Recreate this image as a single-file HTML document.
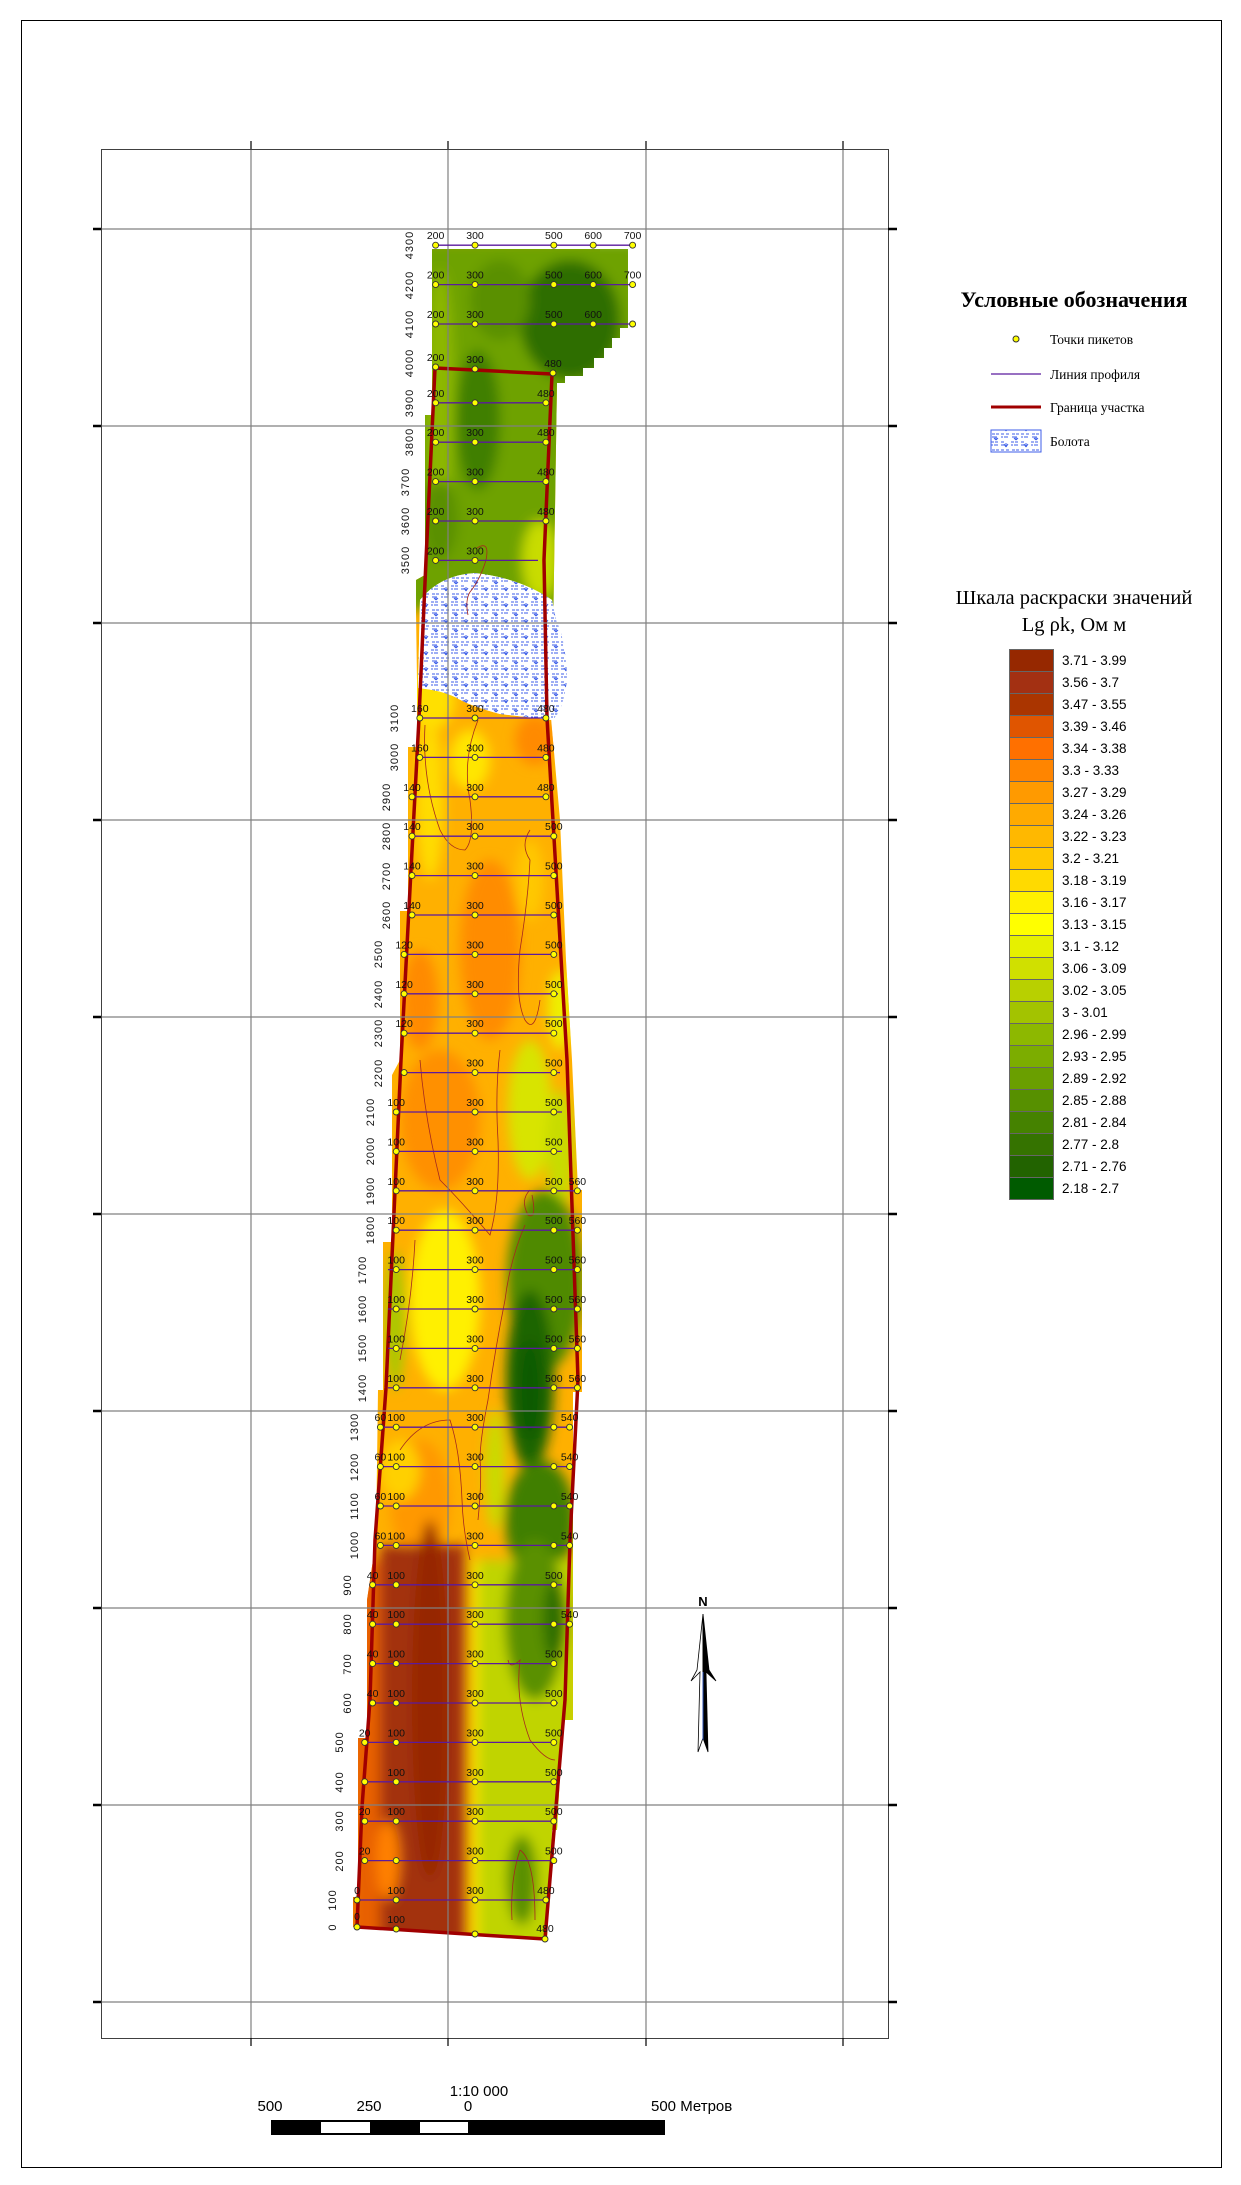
<!DOCTYPE html>
<html><head><meta charset="utf-8"><style>
html,body{margin:0;padding:0;background:#fff}
svg{display:block}
.pk text{font:10.5px "Liberation Sans",sans-serif;fill:#111;text-anchor:middle}
.rl{font:11px "Liberation Sans",sans-serif;fill:#111;text-anchor:middle;letter-spacing:1px}
</style></head><body>
<svg width="1241" height="2185" viewBox="0 0 1241 2185" xmlns="http://www.w3.org/2000/svg">
<defs>
<filter id="bl" x="-20%" y="-20%" width="140%" height="140%"><feGaussianBlur stdDeviation="6"/></filter>
<clipPath id="rc"><polygon points="432,249 628,249 628,328 620,328 620,338 612,338 612,348 604,348 604,358 594,358 594,368 583,368 583,376 565,376 565,383 557,383 552,700 551,718 560,820 566,960 572,1060 578,1190 582,1190 582,1392 573,1392 573,1720 563,1720 557,1830 552,1830 547,1940 356,1928 353,1927 353,1897 358,1897 358,1738 367,1738 367,1600 376,1540 378,1390 383,1390 383,1242 392,1242 392,1075 400,1060 400,911 408,911 408,747 417,747 417,680 416,612 416,580 425,575 425,415 432,415"/></clipPath>
<pattern id="sw" width="20" height="16" patternUnits="userSpaceOnUse">
<rect width="20" height="16" fill="#fff"/>
<g stroke="#3d5ee8" stroke-width="1" fill="none">
<path d="M1 2h3M6 2h3M1 5h2M4 5h4M11 10h3M15 10h3M11 13h2M14 13h4M1 10h3M1 13h4M12 2h3M16 2h3M12 5h5"/>
<path d="M6 15v-4M6 15l-2-3M6 15l2-3M16 8v-3M16 8l-2-2M16 8l2-2"/>
</g></pattern>
</defs>

<rect x="21.5" y="20.5" width="1200" height="2147" fill="none" stroke="#000" stroke-width="1"/>

<g clip-path="url(#rc)">
<rect x="340" y="240" width="260" height="1710" fill="#ffb000"/>
<g filter="url(#bl)">
<rect x="400" y="240" width="240" height="370" fill="#6ea200"/>
<ellipse cx="440" cy="400" rx="14" ry="130" fill="#8db800"/>
<ellipse cx="478" cy="420" rx="22" ry="70" fill="#3f7f00"/>
<ellipse cx="570" cy="320" rx="50" ry="60" fill="#2e6e00"/>
<ellipse cx="500" cy="300" rx="30" ry="40" fill="#5a9000"/>
<ellipse cx="540" cy="560" rx="18" ry="40" fill="#c8dc00"/>
<ellipse cx="440" cy="520" rx="18" ry="40" fill="#5a9000"/>
<ellipse cx="430" cy="700" rx="25" ry="30" fill="#ffe000"/>
<ellipse cx="430" cy="800" rx="14" ry="80" fill="#ffdc00"/>
<ellipse cx="470" cy="760" rx="20" ry="30" fill="#ffe600"/>
<ellipse cx="535" cy="740" rx="20" ry="25" fill="#ff8a00"/>
<ellipse cx="490" cy="950" rx="30" ry="90" fill="#ff8c00"/>
<ellipse cx="420" cy="1000" rx="18" ry="50" fill="#ff8a00"/>
<ellipse cx="560" cy="1010" rx="12" ry="40" fill="#eef000"/>
<ellipse cx="530" cy="880" rx="14" ry="40" fill="#ffc800"/>
<ellipse cx="440" cy="1120" rx="40" ry="70" fill="#ff9000"/>
<ellipse cx="530" cy="1110" rx="22" ry="70" fill="#d8e400"/>
<ellipse cx="560" cy="1150" rx="14" ry="60" fill="#c8dc00"/>
<ellipse cx="445" cy="1300" rx="35" ry="90" fill="#fff000"/>
<ellipse cx="395" cy="1320" rx="10" ry="70" fill="#a8c800"/>
<ellipse cx="545" cy="1280" rx="38" ry="90" fill="#4f8a00"/>
<ellipse cx="530" cy="1380" rx="24" ry="90" fill="#1f6500"/>
<ellipse cx="530" cy="1390" rx="12" ry="50" fill="#0a5a00"/>
<ellipse cx="420" cy="1500" rx="30" ry="60" fill="#ff9800"/>
<ellipse cx="400" cy="1470" rx="20" ry="30" fill="#ffd000"/>
<ellipse cx="540" cy="1520" rx="35" ry="60" fill="#3f7f00"/>
<ellipse cx="495" cy="1470" rx="10" ry="60" fill="#c8dc00"/>
<rect x="350" y="1560" width="125" height="400" fill="#e86000"/>
<rect x="380" y="1545" width="85" height="400" fill="#a33010"/>
<ellipse cx="430" cy="1700" rx="18" ry="180" fill="#962800"/>
<ellipse cx="388" cy="1860" rx="12" ry="40" fill="#ff8000"/>
<rect x="478" y="1560" width="100" height="400" fill="#c0d400"/>
<rect x="470" y="1560" width="8" height="400" fill="#ffe800"/>
<ellipse cx="535" cy="1620" rx="30" ry="80" fill="#5a9000"/>
<ellipse cx="555" cy="1620" rx="12" ry="40" fill="#2e6e00"/>
<ellipse cx="522" cy="1880" rx="15" ry="45" fill="#5a9000"/>
</g>
</g>

<path d="M420 600 Q440 575 475 573 Q520 578 552 600 L556 620 Q566 640 567 680 Q563 712 552 720 L500 714 Q470 706 455 697 Q440 690 418 688 Z" fill="#fff"/>
<path d="M420 600 Q440 575 475 573 Q520 578 552 600 L556 620 Q566 640 567 680 Q563 712 552 720 L500 714 Q470 706 455 697 Q440 690 418 688 Z" fill="url(#sw)"/>

<g fill="none" stroke="#a5281e" stroke-width="0.8">
<path d="M477 548 Q490 540 486 560 Q480 580 470 592 Q465 600 468 615"/>
<path d="M425 725 Q422 780 440 830 Q450 850 465 850 Q475 840 470 800 Q462 760 478 720"/>
<path d="M530 830 Q520 845 530 860 Q528 900 520 950 Q515 1000 525 1020 Q535 1035 540 1000"/>
<path d="M420 1060 Q425 1120 440 1180 Q460 1200 490 1235 Q500 1200 498 1140 Q495 1090 500 1050"/>
<path d="M530 1190 Q520 1200 528 1215 Q537 1220 532 1195"/>
<path d="M525 1225 Q510 1260 505 1300 Q495 1350 488 1400 Q480 1440 480 1460 Q482 1480 478 1520"/>
<path d="M415 1240 Q412 1300 400 1360"/>
<path d="M400 1450 Q420 1420 450 1420 Q460 1450 462 1500 Q463 1530 470 1560"/>
<path d="M508 1660 Q510 1670 520 1660 Q515 1700 530 1740 Q545 1760 555 1760"/>
<path d="M520 1850 Q510 1880 512 1920 M520 1850 Q535 1860 535 1920"/>
</g>

<polygon points="435,368 552,374 544,560 547,718 567,1060 578,1380 572,1500 570,1540 565,1700 556,1807 545,1939 357,1927 362,1807 370,1700 375,1540 386,1388 401,1060 419,718 426,560" fill="none" stroke="#a00000" stroke-width="3.5" stroke-linejoin="round"/>

<g stroke="#808080" stroke-width="1.2">
<path d="M251 149V2038M448 149V2038M646 149V2038M843 149V2038"/>
<path d="M101 229H888M101 426H888M101 623H888M101 820H888M101 1017H888M101 1214H888M101 1411H888M101 1608H888M101 1805H888M101 2002H888"/>
</g>
<rect x="101.5" y="149.5" width="787" height="1889" fill="none" stroke="#404040" stroke-width="1"/>
<g stroke="#000" stroke-width="1.2">
<path d="M251 141V149M448 141V149M646 141V149M843 141V149M251 2038V2046M448 2038V2046M646 2038V2046M843 2038V2046"/>
</g>
<g stroke="#000" stroke-width="2.5">
<path d="M93 229H101M93 426H101M93 623H101M93 820H101M93 1017H101M93 1214H101M93 1411H101M93 1608H101M93 1805H101M93 2002H101"/>
<path d="M888 229H897M888 426H897M888 623H897M888 820H897M888 1017H897M888 1214H897M888 1411H897M888 1608H897M888 1805H897M888 2002H897"/>
</g>

<g stroke="#5b1a9e" stroke-width="1.3">
<path d="M435.6 245.2H632.6M435.6 284.6H632.6M435.6 324H632.6M435.6 402.8H545.9M435.6 442.2H545.9M435.6 481.6H545.9M435.6 521H545.9M435.6 560.4H538"/>
<path d="M419.8 718H545.9M419.8 757.4H545.9M412 796.8H545.9M412 836.2H553.8M412 875.6H553.8M412 915H553.8M404.1 954.4H553.8M404.1 993.8H558M404.1 1033.2H553.8M404.1 1072.6H560M396.2 1112H562M396.2 1151.4H562M396.2 1190.8H577.4M396.2 1230.2H577.4M388 1269.6H577.4M388 1309H577.4M388 1348.4H577.4M388 1387.8H577.4"/>
<path d="M380.4 1427.2H569.6M380.4 1466.6H569.6M380.4 1506H569.6M380.4 1545.4H569.6M372.6 1584.8H562M372.6 1624.2H569.6M372.6 1663.6H553.8M372.6 1703H558M364.7 1742.4H553.8M364.7 1781.8H553.8M364.7 1821.2H553.8M364.7 1860.6H553.8M357 1900H545.9"/>
</g>

<g class="pk">
<g transform="translate(0,245.2)"><text x="435.6" y="-6">200</text><text x="475" y="-6">300</text><text x="553.8" y="-6">500</text><text x="593.2" y="-6">600</text><text x="632.6" y="-6">700</text></g>
<g transform="translate(0,284.6)"><text x="435.6" y="-6">200</text><text x="475" y="-6">300</text><text x="553.8" y="-6">500</text><text x="593.2" y="-6">600</text><text x="632.6" y="-6">700</text></g>
<g transform="translate(0,324)"><text x="435.6" y="-6">200</text><text x="475" y="-6">300</text><text x="553.8" y="-6">500</text><text x="593.2" y="-6">600</text></g>
<text x="435.6" y="361">200</text><text x="475" y="363">300</text><text x="553" y="367">480</text>
<g transform="translate(0,402.8)"><text x="435.6" y="-6">200</text><text x="545.9" y="-6">480</text></g>
<g transform="translate(0,442.2)"><text x="435.6" y="-6">200</text><text x="475" y="-6">300</text><text x="545.9" y="-6">480</text></g>
<g transform="translate(0,481.6)"><text x="435.6" y="-6">200</text><text x="475" y="-6">300</text><text x="545.9" y="-6">480</text></g>
<g transform="translate(0,521)"><text x="435.6" y="-6">200</text><text x="475" y="-6">300</text><text x="545.9" y="-6">480</text></g>
<g transform="translate(0,560.4)"><text x="435.6" y="-6">200</text><text x="475" y="-6">300</text></g>
<g transform="translate(0,718)"><text x="419.8" y="-6">160</text><text x="475" y="-6">300</text><text x="545.9" y="-6">480</text></g>
<g transform="translate(0,757.4)"><text x="419.8" y="-6">160</text><text x="475" y="-6">300</text><text x="545.9" y="-6">480</text></g>
<g transform="translate(0,796.8)"><text x="412" y="-6">140</text><text x="475" y="-6">300</text><text x="545.9" y="-6">480</text></g>
<g transform="translate(0,836.2)"><text x="412" y="-6">140</text><text x="475" y="-6">300</text><text x="553.8" y="-6">500</text></g>
<g transform="translate(0,875.6)"><text x="412" y="-6">140</text><text x="475" y="-6">300</text><text x="553.8" y="-6">500</text></g>
<g transform="translate(0,915)"><text x="412" y="-6">140</text><text x="475" y="-6">300</text><text x="553.8" y="-6">500</text></g>
<g transform="translate(0,954.4)"><text x="404.1" y="-6">120</text><text x="475" y="-6">300</text><text x="553.8" y="-6">500</text></g>
<g transform="translate(0,993.8)"><text x="404.1" y="-6">120</text><text x="475" y="-6">300</text><text x="553.8" y="-6">500</text></g>
<g transform="translate(0,1033.2)"><text x="404.1" y="-6">120</text><text x="475" y="-6">300</text><text x="553.8" y="-6">500</text></g>
<g transform="translate(0,1072.6)"><text x="475" y="-6">300</text><text x="553.8" y="-6">500</text></g>
<g transform="translate(0,1112)"><text x="396.2" y="-6">100</text><text x="475" y="-6">300</text><text x="553.8" y="-6">500</text></g>
<g transform="translate(0,1151.4)"><text x="396.2" y="-6">100</text><text x="475" y="-6">300</text><text x="553.8" y="-6">500</text></g>
<g transform="translate(0,1190.8)"><text x="396.2" y="-6">100</text><text x="475" y="-6">300</text><text x="553.8" y="-6">500</text><text x="577.4" y="-6">560</text></g>
<g transform="translate(0,1230.2)"><text x="396.2" y="-6">100</text><text x="475" y="-6">300</text><text x="553.8" y="-6">500</text><text x="577.4" y="-6">560</text></g>
<g transform="translate(0,1269.6)"><text x="396.2" y="-6">100</text><text x="475" y="-6">300</text><text x="553.8" y="-6">500</text><text x="577.4" y="-6">560</text></g>
<g transform="translate(0,1309)"><text x="396.2" y="-6">100</text><text x="475" y="-6">300</text><text x="553.8" y="-6">500</text><text x="577.4" y="-6">560</text></g>
<g transform="translate(0,1348.4)"><text x="396.2" y="-6">100</text><text x="475" y="-6">300</text><text x="553.8" y="-6">500</text><text x="577.4" y="-6">560</text></g>
<g transform="translate(0,1387.8)"><text x="396.2" y="-6">100</text><text x="475" y="-6">300</text><text x="553.8" y="-6">500</text><text x="577.4" y="-6">560</text></g>
<g transform="translate(0,1427.2)"><text x="380.4" y="-6">60</text><text x="396.2" y="-6">100</text><text x="475" y="-6">300</text><text x="569.6" y="-6">540</text></g>
<g transform="translate(0,1466.6)"><text x="380.4" y="-6">60</text><text x="396.2" y="-6">100</text><text x="475" y="-6">300</text><text x="569.6" y="-6">540</text></g>
<g transform="translate(0,1506)"><text x="380.4" y="-6">60</text><text x="396.2" y="-6">100</text><text x="475" y="-6">300</text><text x="569.6" y="-6">540</text></g>
<g transform="translate(0,1545.4)"><text x="380.4" y="-6">60</text><text x="396.2" y="-6">100</text><text x="475" y="-6">300</text><text x="569.6" y="-6">540</text></g>
<g transform="translate(0,1584.8)"><text x="372.6" y="-6">40</text><text x="396.2" y="-6">100</text><text x="475" y="-6">300</text><text x="553.8" y="-6">500</text></g>
<g transform="translate(0,1624.2)"><text x="372.6" y="-6">40</text><text x="396.2" y="-6">100</text><text x="475" y="-6">300</text><text x="569.6" y="-6">540</text></g>
<g transform="translate(0,1663.6)"><text x="372.6" y="-6">40</text><text x="396.2" y="-6">100</text><text x="475" y="-6">300</text><text x="553.8" y="-6">500</text></g>
<g transform="translate(0,1703)"><text x="372.6" y="-6">40</text><text x="396.2" y="-6">100</text><text x="475" y="-6">300</text><text x="553.8" y="-6">500</text></g>
<g transform="translate(0,1742.4)"><text x="364.7" y="-6">20</text><text x="396.2" y="-6">100</text><text x="475" y="-6">300</text><text x="553.8" y="-6">500</text></g>
<g transform="translate(0,1781.8)"><text x="396.2" y="-6">100</text><text x="475" y="-6">300</text><text x="553.8" y="-6">500</text></g>
<g transform="translate(0,1821.2)"><text x="364.7" y="-6">20</text><text x="396.2" y="-6">100</text><text x="475" y="-6">300</text><text x="553.8" y="-6">500</text></g>
<g transform="translate(0,1860.6)"><text x="364.7" y="-6">20</text><text x="475" y="-6">300</text><text x="553.8" y="-6">500</text></g>
<g transform="translate(0,1900)"><text x="357" y="-6">0</text><text x="396.2" y="-6">100</text><text x="475" y="-6">300</text><text x="545.9" y="-6">480</text></g>
<text x="357" y="1920">0</text><text x="396.2" y="1923">100</text><text x="545" y="1932">480</text>
</g>

<g fill="#ffff00" stroke="#333" stroke-width="0.9">
<g id="d1"><circle cx="435.6" cy="245.2" r="3"/><circle cx="475" cy="245.2" r="3"/><circle cx="553.8" cy="245.2" r="3"/><circle cx="593.2" cy="245.2" r="3"/><circle cx="632.6" cy="245.2" r="3"/></g>
<use href="#d1" transform="translate(0,39.4)"/><use href="#d1" transform="translate(0,78.8)"/>
<circle cx="435.6" cy="367" r="3"/><circle cx="475" cy="369" r="3"/><circle cx="553" cy="373" r="3"/>
<g id="d2"><circle cx="435.6" cy="402.8" r="3"/><circle cx="475" cy="402.8" r="3"/><circle cx="545.9" cy="402.8" r="3"/></g>
<use href="#d2" transform="translate(0,39.4)"/><use href="#d2" transform="translate(0,78.8)"/><use href="#d2" transform="translate(0,118.2)"/>
<circle cx="435.6" cy="560.4" r="3"/><circle cx="475" cy="560.4" r="3"/>
<circle cx="419.8" cy="718" r="3"/><circle cx="475" cy="718" r="3"/><circle cx="545.9" cy="718" r="3"/>
<circle cx="419.8" cy="757.4" r="3"/><circle cx="475" cy="757.4" r="3"/><circle cx="545.9" cy="757.4" r="3"/>
<circle cx="412" cy="796.8" r="3"/><circle cx="475" cy="796.8" r="3"/><circle cx="545.9" cy="796.8" r="3"/>
<g id="d3"><circle cx="412" cy="836.2" r="3"/><circle cx="475" cy="836.2" r="3"/><circle cx="553.8" cy="836.2" r="3"/></g>
<use href="#d3" transform="translate(0,39.4)"/><use href="#d3" transform="translate(0,78.8)"/>
<g id="d4"><circle cx="404.1" cy="954.4" r="3"/><circle cx="475" cy="954.4" r="3"/><circle cx="553.8" cy="954.4" r="3"/></g>
<use href="#d4" transform="translate(0,39.4)"/><use href="#d4" transform="translate(0,78.8)"/><use href="#d4" transform="translate(0,118.2)"/>
<circle cx="396.2" cy="1112" r="3"/><circle cx="475" cy="1112" r="3"/><circle cx="553.8" cy="1112" r="3"/>
<circle cx="396.2" cy="1151.4" r="3"/><circle cx="475" cy="1151.4" r="3"/><circle cx="553.8" cy="1151.4" r="3"/>
<g id="d5"><circle cx="396.2" cy="1190.8" r="3"/><circle cx="475" cy="1190.8" r="3"/><circle cx="553.8" cy="1190.8" r="3"/><circle cx="577.4" cy="1190.8" r="3"/></g>
<use href="#d5" transform="translate(0,39.4)"/><use href="#d5" transform="translate(0,78.8)"/><use href="#d5" transform="translate(0,118.2)"/><use href="#d5" transform="translate(0,157.6)"/><use href="#d5" transform="translate(0,197)"/>
<g id="d6"><circle cx="380.4" cy="1427.2" r="3"/><circle cx="396.2" cy="1427.2" r="3"/><circle cx="475" cy="1427.2" r="3"/><circle cx="553.8" cy="1427.2" r="3"/><circle cx="569.6" cy="1427.2" r="3"/></g>
<use href="#d6" transform="translate(0,39.4)"/><use href="#d6" transform="translate(0,78.8)"/><use href="#d6" transform="translate(0,118.2)"/>
<circle cx="372.6" cy="1584.8" r="3"/><circle cx="396.2" cy="1584.8" r="3"/><circle cx="475" cy="1584.8" r="3"/><circle cx="553.8" cy="1584.8" r="3"/>
<circle cx="372.6" cy="1624.2" r="3"/><circle cx="396.2" cy="1624.2" r="3"/><circle cx="475" cy="1624.2" r="3"/><circle cx="553.8" cy="1624.2" r="3"/><circle cx="569.6" cy="1624.2" r="3"/>
<g id="d7"><circle cx="372.6" cy="1663.6" r="3"/><circle cx="396.2" cy="1663.6" r="3"/><circle cx="475" cy="1663.6" r="3"/><circle cx="553.8" cy="1663.6" r="3"/></g>
<use href="#d7" transform="translate(0,39.4)"/>
<g id="d8"><circle cx="364.7" cy="1742.4" r="3"/><circle cx="396.2" cy="1742.4" r="3"/><circle cx="475" cy="1742.4" r="3"/><circle cx="553.8" cy="1742.4" r="3"/></g>
<use href="#d8" transform="translate(0,39.4)"/><use href="#d8" transform="translate(0,78.8)"/><use href="#d8" transform="translate(0,118.2)"/>
<circle cx="357" cy="1900" r="3"/><circle cx="396.2" cy="1900" r="3"/><circle cx="475" cy="1900" r="3"/><circle cx="545.9" cy="1900" r="3"/>
<circle cx="357" cy="1927" r="3"/><circle cx="396.2" cy="1929" r="3"/><circle cx="475" cy="1934" r="3"/><circle cx="545" cy="1939" r="3"/>
</g>

<g class="rl">
<text transform="translate(413,245) rotate(-90)">4300</text>
<text transform="translate(413,285) rotate(-90)">4200</text>
<text transform="translate(413,324) rotate(-90)">4100</text>
<text transform="translate(413,363) rotate(-90)">4000</text>
<text transform="translate(413,403) rotate(-90)">3900</text>
<text transform="translate(413,442) rotate(-90)">3800</text>
<text transform="translate(409,482) rotate(-90)">3700</text>
<text transform="translate(409,521) rotate(-90)">3600</text>
<text transform="translate(409,560) rotate(-90)">3500</text>
<text transform="translate(398,718) rotate(-90)">3100</text>
<text transform="translate(398,757) rotate(-90)">3000</text>
<text transform="translate(390,797) rotate(-90)">2900</text>
<text transform="translate(390,836) rotate(-90)">2800</text>
<text transform="translate(390,876) rotate(-90)">2700</text>
<text transform="translate(390,915) rotate(-90)">2600</text>
<text transform="translate(382,954) rotate(-90)">2500</text>
<text transform="translate(382,994) rotate(-90)">2400</text>
<text transform="translate(382,1033) rotate(-90)">2300</text>
<text transform="translate(382,1073) rotate(-90)">2200</text>
<text transform="translate(374,1112) rotate(-90)">2100</text>
<text transform="translate(374,1151) rotate(-90)">2000</text>
<text transform="translate(374,1191) rotate(-90)">1900</text>
<text transform="translate(374,1230) rotate(-90)">1800</text>
<text transform="translate(366,1270) rotate(-90)">1700</text>
<text transform="translate(366,1309) rotate(-90)">1600</text>
<text transform="translate(366,1348) rotate(-90)">1500</text>
<text transform="translate(366,1388) rotate(-90)">1400</text>
<text transform="translate(358,1427) rotate(-90)">1300</text>
<text transform="translate(358,1467) rotate(-90)">1200</text>
<text transform="translate(358,1506) rotate(-90)">1100</text>
<text transform="translate(358,1545) rotate(-90)">1000</text>
<text transform="translate(351,1585) rotate(-90)">900</text>
<text transform="translate(351,1624) rotate(-90)">800</text>
<text transform="translate(351,1664) rotate(-90)">700</text>
<text transform="translate(351,1703) rotate(-90)">600</text>
<text transform="translate(343,1742) rotate(-90)">500</text>
<text transform="translate(343,1782) rotate(-90)">400</text>
<text transform="translate(343,1821) rotate(-90)">300</text>
<text transform="translate(343,1861) rotate(-90)">200</text>
<text transform="translate(336,1900) rotate(-90)">100</text>
<text transform="translate(336,1927) rotate(-90)">0</text>
</g>

<text x="703" y="1606" font-family="Liberation Sans,sans-serif" font-size="13" font-weight="bold" text-anchor="middle">N</text>
<path d="M703 1614 L697 1670 L691 1681 L700 1672 L698 1752 L703 1738 Z" fill="#fff" stroke="#000" stroke-width="0.8"/>
<path d="M703 1614 L709 1670 L716 1681 L706 1672 L708 1752 L703 1738 Z" fill="#000" stroke="#000" stroke-width="0.8"/>
<path d="M703 1672 L703 1740" stroke="#2a4fb0" stroke-width="1"/>

<g font-family="Liberation Sans,sans-serif" font-size="15" fill="#000">
<text x="479" y="2096" text-anchor="middle">1:10 000</text>
<text x="270" y="2111" text-anchor="middle">500</text>
<text x="369" y="2111" text-anchor="middle">250</text>
<text x="468" y="2111" text-anchor="middle">0</text>
<text x="651" y="2111">500 Метров</text>
</g>
<rect x="271" y="2120" width="394" height="15" fill="#000"/>
<rect x="321" y="2122" width="49" height="11" fill="#fff"/>
<rect x="420" y="2122" width="48" height="11" fill="#fff"/>

<text x="1074" y="307" font-family="Liberation Serif,serif" font-size="22" font-weight="bold" text-anchor="middle">Условные обозначения</text>
<g font-family="Liberation Serif,serif" font-size="13.5">
<circle cx="1016" cy="339" r="3" fill="#ffff00" stroke="#333"/>
<text x="1050" y="344">Точки пикетов</text>
<line x1="991" y1="374" x2="1041" y2="374" stroke="#5b1a9e" stroke-width="1.3"/>
<text x="1050" y="379">Линия профиля</text>
<line x1="991" y1="407" x2="1041" y2="407" stroke="#a00000" stroke-width="3"/>
<text x="1050" y="412">Граница участка</text>
<rect x="991" y="430" width="50" height="22" fill="url(#sw)" stroke="#3d5ee8" stroke-width="1"/>
<text x="1050" y="446">Болота</text>
</g>
<g font-family="Liberation Serif,serif" font-size="20.5" text-anchor="middle">
<text x="1074" y="604">Шкала раскраски значений</text>
<text x="1074" y="631">Lg ρk, Ом м</text>
</g>
<g stroke="#666" stroke-width="1">
<rect x="1009.5" y="649.5" width="44" height="22" fill="#962800"/>
<rect x="1009.5" y="671.5" width="44" height="22" fill="#a33012"/>
<rect x="1009.5" y="693.5" width="44" height="22" fill="#aa3500"/>
<rect x="1009.5" y="715.5" width="44" height="22" fill="#e05500"/>
<rect x="1009.5" y="737.5" width="44" height="22" fill="#ff7000"/>
<rect x="1009.5" y="759.5" width="44" height="22" fill="#ff8500"/>
<rect x="1009.5" y="781.5" width="44" height="22" fill="#ff9a00"/>
<rect x="1009.5" y="803.5" width="44" height="22" fill="#ffaa00"/>
<rect x="1009.5" y="825.5" width="44" height="22" fill="#ffb800"/>
<rect x="1009.5" y="847.5" width="44" height="22" fill="#ffc800"/>
<rect x="1009.5" y="869.5" width="44" height="22" fill="#ffda00"/>
<rect x="1009.5" y="891.5" width="44" height="22" fill="#fff000"/>
<rect x="1009.5" y="913.5" width="44" height="22" fill="#ffff00"/>
<rect x="1009.5" y="935.5" width="44" height="22" fill="#e6f000"/>
<rect x="1009.5" y="957.5" width="44" height="22" fill="#d0e000"/>
<rect x="1009.5" y="979.5" width="44" height="22" fill="#b8d000"/>
<rect x="1009.5" y="1001.5" width="44" height="22" fill="#a3c300"/>
<rect x="1009.5" y="1023.5" width="44" height="22" fill="#8db800"/>
<rect x="1009.5" y="1045.5" width="44" height="22" fill="#7cad00"/>
<rect x="1009.5" y="1067.5" width="44" height="22" fill="#6a9f00"/>
<rect x="1009.5" y="1089.5" width="44" height="22" fill="#579000"/>
<rect x="1009.5" y="1111.5" width="44" height="22" fill="#458200"/>
<rect x="1009.5" y="1133.5" width="44" height="22" fill="#357300"/>
<rect x="1009.5" y="1155.5" width="44" height="22" fill="#226300"/>
<rect x="1009.5" y="1177.5" width="44" height="22" fill="#005b00"/>
</g>
<g font-family="Liberation Sans,sans-serif" font-size="13.5" fill="#000">
<text x="1062" y="665">3.71 - 3.99</text>
<text x="1062" y="687">3.56 - 3.7</text>
<text x="1062" y="709">3.47 - 3.55</text>
<text x="1062" y="731">3.39 - 3.46</text>
<text x="1062" y="753">3.34 - 3.38</text>
<text x="1062" y="775">3.3 - 3.33</text>
<text x="1062" y="797">3.27 - 3.29</text>
<text x="1062" y="819">3.24 - 3.26</text>
<text x="1062" y="841">3.22 - 3.23</text>
<text x="1062" y="863">3.2 - 3.21</text>
<text x="1062" y="885">3.18 - 3.19</text>
<text x="1062" y="907">3.16 - 3.17</text>
<text x="1062" y="929">3.13 - 3.15</text>
<text x="1062" y="951">3.1 - 3.12</text>
<text x="1062" y="973">3.06 - 3.09</text>
<text x="1062" y="995">3.02 - 3.05</text>
<text x="1062" y="1017">3 - 3.01</text>
<text x="1062" y="1039">2.96 - 2.99</text>
<text x="1062" y="1061">2.93 - 2.95</text>
<text x="1062" y="1083">2.89 - 2.92</text>
<text x="1062" y="1105">2.85 - 2.88</text>
<text x="1062" y="1127">2.81 - 2.84</text>
<text x="1062" y="1149">2.77 - 2.8</text>
<text x="1062" y="1171">2.71 - 2.76</text>
<text x="1062" y="1193">2.18 - 2.7</text>
</g>
</svg>
</body></html>
